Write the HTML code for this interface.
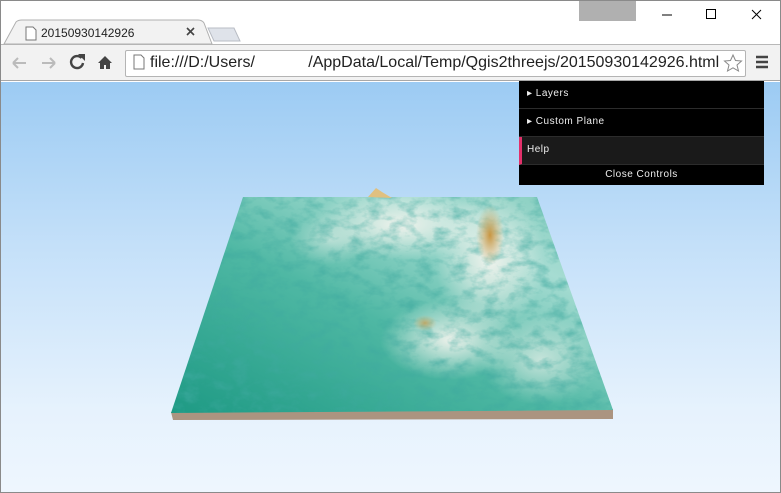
<!DOCTYPE html>
<html><head><meta charset="utf-8"><style>
*{margin:0;padding:0;box-sizing:border-box}
body{width:781px;height:493px;overflow:hidden;font-family:"Liberation Sans",sans-serif;background:#fff;position:relative}
.win{position:absolute;inset:0;border:1px solid #8a8a8a;z-index:5;pointer-events:none}
.top{position:absolute;left:1px;top:1px;right:1px;height:43px;background:#fff}
.tabtxt{position:absolute;left:41px;top:26px;font-size:12px;color:#222}
.nav{position:absolute;left:1px;top:44px;right:1px;height:37px;background:#f2f2f2;border-top:1px solid #b8b8b8;border-bottom:1px solid #a8a8a8}
.url{position:absolute;left:125px;top:50px;width:621px;height:27px;background:#fff;border:1px solid #b4b4b4;border-radius:2px}
.urltxt{position:absolute;left:150px;top:54px;font-size:16px;color:#222;white-space:pre}
.view{position:absolute;left:1px;top:82px;right:1px;bottom:1px;background:linear-gradient(#9ccbf3,#c4e0f9 40%,#e6f2fd 80%,#eef6fe)}
.panel{position:absolute;left:519px;top:81px;width:245px;height:104px;background:#000;color:#eee;font-size:10px;letter-spacing:.5px}
.row{height:28px;border-bottom:1px solid #2c2c2c;padding:7px 0 0 8px}
</style></head><body>
<div class="win"></div>
<div class="top"></div>
<div class="nav"></div>
<div class="url"></div>
<div style="position:absolute;left:579px;top:1px;width:57px;height:20px;background:#b0b0b0"></div>
<svg style="position:absolute;left:0;top:0" width="781" height="82">
<path d="M4 44 L16 22 Q18 20 22 20 L198 20 Q202 20 204 23 L212 44 Z" fill="#f2f2f2" stroke="#b0b0b0"/>
<path d="M208 28 L234 28 L240 41 L214 41 Z" fill="#dfe3ea" stroke="#b8bcc4"/>
<path d="M26 27h7l3 3v10h-10z" fill="#fff" stroke="#777"/>
<path d="M187 28l7 7M194 28l-7 7" stroke="#444" stroke-width="1.6"/>
<path d="M662 15h10" stroke="#000"/><rect x="706.5" y="9.5" width="9" height="9" fill="none" stroke="#000"/>
<path d="M752 10l9 9M761 10l-9 9" stroke="#000"/>
<path d="M13 63h13M13 63l5-5M13 63l5 5" stroke="#bbb" stroke-width="2" fill="none"/>
<path d="M55 63h-13M55 63l-5-5M55 63l-5 5" stroke="#bbb" stroke-width="2" fill="none"/>
<path d="M81.5 58a6 6 0 1 0 1.5 5" stroke="#444" stroke-width="2.4" fill="none"/><path d="M78 54l7 0 0 7z" fill="#444"/>
<path d="M98 63l7-7 7 7h-2v6h-4v-4h-2v4h-4v-6z" fill="#444"/>
<path d="M134 55h7l3 3v11h-10z" fill="#fff" stroke="#777"/>
<path d="M733 55l2.5 5.5 6 .5-4.5 4 1.5 6-5.5-3.2-5.5 3.2 1.5-6-4.5-4 6-.5z" fill="none" stroke="#888"/>
<path d="M756 57h12M756 62h12M756 67h12" stroke="#444" stroke-width="2.4"/>
</svg>
<div class="tabtxt">20150930142926</div>
<div class="urltxt">file:///D:/Users/            /AppData/Local/Temp/Qgis2threejs/20150930142926.html</div>
<div class="view"></div>
<svg style="position:absolute;left:0;top:0" width="781" height="493">
<defs>
<linearGradient id="g" x1="0" y1="1" x2="1" y2="0"><stop offset="0" stop-color="#1e9a84"/><stop offset=".45" stop-color="#4fb8a4"/><stop offset=".75" stop-color="#a6dcd2"/><stop offset="1" stop-color="#7fcabb"/></linearGradient>
<radialGradient id="w"><stop offset="0" stop-color="#f4f4ee" stop-opacity=".95"/><stop offset="1" stop-color="#f4f4ee" stop-opacity="0"/></radialGradient>
<radialGradient id="b"><stop offset="0" stop-color="#c89540"/><stop offset="1" stop-color="#d8b070" stop-opacity="0"/></radialGradient>
<clipPath id="c"><path d="M243 197L537 197L613 410L171 413Z"/></clipPath>
<filter id="n" x="0" y="0" width="100%" height="100%">
<feTurbulence type="fractalNoise" baseFrequency="0.06 0.1" numOctaves="4" seed="3"/>
<feColorMatrix values="0 0 0 0 0.05  0 0 0 0 0.4  0 0 0 0 0.35  0 0 0 -2.2 1.25"/>
</filter>
</defs>
<path d="M171 412L613 409L613 419L173 420Z" fill="#ab9480"/>
<path d="M243 197L537 197L613 410L171 413Z" fill="url(#g)"/>
<g clip-path="url(#c)">
<ellipse cx="400" cy="225" rx="90" ry="35" fill="url(#w)"/>
<ellipse cx="490" cy="260" rx="55" ry="70" fill="url(#w)"/>
<ellipse cx="450" cy="340" rx="70" ry="40" fill="url(#w)"/>
<ellipse cx="540" cy="360" rx="60" ry="45" fill="url(#w)" opacity=".7"/>
<ellipse cx="330" cy="240" rx="40" ry="25" fill="url(#w)" opacity=".5"/>
<rect x="170" y="190" width="450" height="230" filter="url(#n)" opacity=".6"/>
<ellipse cx="490" cy="235" rx="14" ry="30" fill="url(#b)"/>
<ellipse cx="425" cy="323" rx="12" ry="8" fill="url(#b)" opacity=".7"/>
</g>
<path d="M368 197l8-9 6 4 10 6z" fill="#e0c080"/>
</svg>
<div class="panel">
<div class="row">▸ Layers</div>
<div class="row">▸ Custom Plane</div>
<div class="row" style="background:#1a1a1a;border-left:3px solid #e2306a;padding-left:5px">Help</div>
<div style="text-align:center;padding-top:4px">Close Controls</div>
</div>
</body></html>
